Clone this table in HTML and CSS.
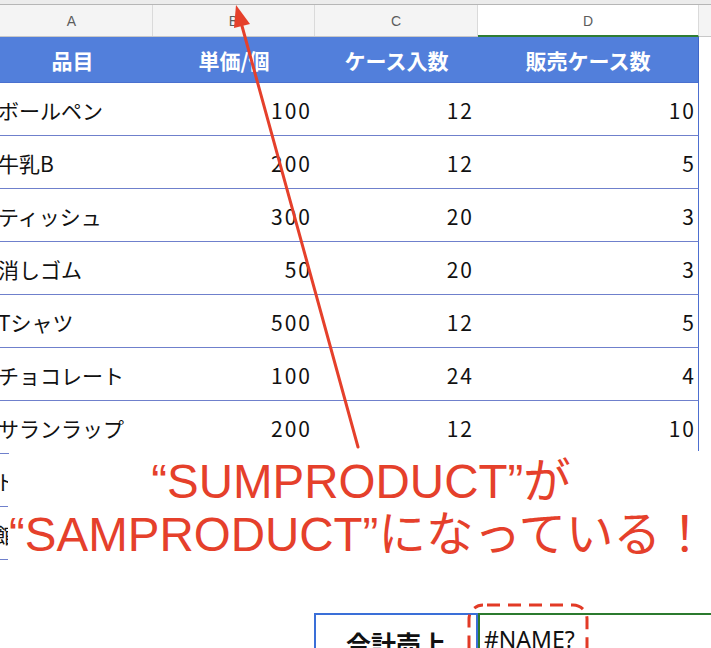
FILE: index.html
```html
<!DOCTYPE html>
<html lang="ja">
<head>
<meta charset="utf-8">
<title>SUMPRODUCT</title>
<link rel="stylesheet" href="styles.css">
</head>
<body>
<div class="sheet">
  <div class="topbar"></div>
  <div class="grid colheads">
    <div class="ch a">A</div>
    <div class="ch">B</div>
    <div class="ch">C</div>
    <div class="ch sel">D</div>
    <div class="ch e"></div>
  </div>

  <div class="grid row head">
    <div class="c first">品目</div>
    <div class="c">単価/個</div>
    <div class="c">ケース入数</div>
    <div class="c last">販売ケース数</div>
    <div class="e"></div>
  </div>
  <div class="grid row"><div class="name">ボールペン</div><div class="num nb">100</div><div class="num nc">12</div><div class="num nd last">10</div><div class="e"></div></div>
  <div class="grid row"><div class="name">牛乳B</div><div class="num nb">200</div><div class="num nc">12</div><div class="num nd last">5</div><div class="e"></div></div>
  <div class="grid row"><div class="name">ティッシュ</div><div class="num nb">300</div><div class="num nc">20</div><div class="num nd last">3</div><div class="e"></div></div>
  <div class="grid row"><div class="name">消しゴム</div><div class="num nb">50</div><div class="num nc">20</div><div class="num nd last">3</div><div class="e"></div></div>
  <div class="grid row"><div class="name">Tシャツ</div><div class="num nb">500</div><div class="num nc">12</div><div class="num nd last">5</div><div class="e"></div></div>
  <div class="grid row"><div class="name">チョコレート</div><div class="num nb">100</div><div class="num nc">24</div><div class="num nd last">4</div><div class="e"></div></div>
  <div class="grid row"><div class="name">サランラップ</div><div class="num nb">200</div><div class="num nc">12</div><div class="num nd last">10</div><div class="e"></div></div>
  <div class="grid row stub"><div class="name">ト</div></div>
  <div class="grid row stub"><div class="name">館</div></div>

  <div class="grid totals">
    <div class="tlabel">合計売上</div>
    <div class="tvalue">#NAME?</div>
  </div>

  <div class="note">
    <div class="line">“SUMPRODUCT”が</div>
    <div class="line">“SAMPRODUCT”になっている！</div>
  </div>

  <svg class="arrow" width="711" height="648" viewBox="0 0 711 648">
    <line x1="358" y1="447" x2="242" y2="26" stroke="#e5402b" stroke-width="3" stroke-linecap="round"/>
    <polygon points="236,5 250,24 234,28" fill="#e5402b"/>
  </svg>

  <svg class="dash" width="124" height="60" viewBox="0 0 124 60">
    <rect x="2" y="2" width="118" height="90" rx="14" ry="14" fill="none" stroke="#e23a26" stroke-width="3" stroke-dasharray="13 8" stroke-dashoffset="-4"/>
  </svg>
</div>
</body>
</html>
```

FILE: styles.css
```css
html, body {
  margin: 0;
  padding: 0;
}
body {
  width: 711px;
  height: 648px;
  overflow: hidden;
  background: #ffffff;
  font-family: "Noto Sans CJK JP", "Noto Sans", sans-serif;
  color: #111;
}
.sheet {
  position: relative;
  width: 711px;
  height: 648px;
  overflow: hidden;
}
.topbar {
  height: 4px;
  background: #ececec;
  border-bottom: 1px solid #b6b6b6;
}
.grid {
  display: grid;
  grid-template-columns: 153px 162px 163px 221px 1fr;
}
.colheads {
  height: 32px;
  box-sizing: border-box;
  background: #f4f4f4;
  border-bottom: 1px solid #c8c8c8;
  font-family: "Liberation Sans", Arial, sans-serif;
  font-size: 14px;
  color: #5c5c5c;
}
.ch {
  display: flex;
  align-items: center;
  justify-content: center;
  border-right: 1px solid #dadada;
}
.ch.a { padding-right: 9px; }
.ch.sel {
  background: #ffffff;
  border-bottom: 2px solid #2f7d34;
  margin-bottom: -1px;
  padding-top: 1px;
}
.ch.e { border-right: none; }

.row {
  height: 53px;
  font-size: 21px;
}
.row > div {
  display: flex;
  align-items: center;
  box-sizing: border-box;
  border-bottom: 1px solid #6f80cc;
  overflow: hidden;
  white-space: nowrap;
}
.row > .e {
  border-bottom: none;
}
.row > .last {
  border-right: 1px solid #4d6fd0;
}
.row.head {
  height: 46px;
}
.row.head > .c {
  background: #527fdb;
  color: #ffffff;
  font-weight: 700;
  justify-content: center;
  border-bottom: 1px solid #4a70cf;
}
.row.head > .c.first {
  padding-right: 8px;
}
.row.head > .c.last {
  border-right: 1px solid #3f66c8;
}
.name {
  padding-left: 0;
  text-indent: -2px;
  padding-top: 1px;
}
.row.stub > .name {
  width: 8px;
  justify-self: start;
  text-indent: -5px;
}
.num {
  justify-content: flex-end;
  letter-spacing: 2px;
  padding-top: 1px;
}
.nb { padding-right: 3px; }
.nc { padding-right: 4px; }
.nd { padding-right: 2px; }

.totals {
  margin-top: 53px;
  height: 60px;
}
.tlabel {
  grid-column: 3;
  margin-left: -1px;
  border: 2px solid #3a6fd8;
  border-bottom: none;
  text-align: center;
  font-size: 25px;
  font-weight: 700;
  line-height: 30px;
  padding-top: 13px;
  color: #111;
}
.tvalue {
  grid-column: 4 / 6;
  border-top: 2px solid #2b7a2e;
  border-left: 2px solid #2b7a2e;
  font-family: "Noto Sans", sans-serif;
  font-size: 23px;
  line-height: 30px;
  padding-top: 9px;
  padding-left: 4px;
  color: #111;
}

.note {
  position: absolute;
  left: 9px;
  right: 0;
  top: 451px;
  height: 150px;
  background: #ffffff;
  padding-top: 4px;
  box-sizing: border-box;
  text-align: center;
  color: #e5402b;
  font-family: "Liberation Sans", "Noto Sans CJK JP", sans-serif;
  font-size: 47.5px;
  line-height: 53px;
  white-space: nowrap;
}
.note .line:first-child {
  padding-left: 2px;
}
.note .line:last-child {
  padding-right: 11px;
}
.arrow {
  position: absolute;
  left: 0;
  top: 0;
  pointer-events: none;
}
.dash {
  position: absolute;
  left: 467px;
  top: 603px;
  pointer-events: none;
}
```
